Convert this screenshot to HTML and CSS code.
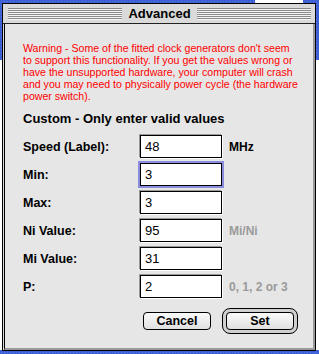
FILE: index.html
```html
<!DOCTYPE html>
<html lang="en">
<head>
    <meta charset="UTF-8">
    <meta name="viewport" content="width=device-width, initial-scale=1.0">
    <link rel="stylesheet" href="styles.css">
    <title>Advanced</title>
</head>
<body>
    <div class="desktop">
        <div class="back-window"></div>
        <div class="back-title"></div>

        <div class="window">
            <div class="titlebar">
                <span class="stripes"></span>
                <span class="title">Advanced</span>
                <span class="stripes"></span>
            </div>
            <div class="content">
                <p class="warning">
                    Warning - Some of the fitted clock generators don't seem<br>
                    to support this functionality. If you get the values wrong or<br>
                    have the unsupported hardware, your computer will crash<br>
                    and you may need to physically power cycle (the hardware<br>
                    power switch).
                </p>
                <h2 class="heading">Custom - Only enter valid values</h2>

                <div class="fields">
                    <label class="label">Speed (Label):</label>
                    <div class="field">48</div>
                    <span class="unit">MHz</span>

                    <label class="label">Min:</label>
                    <div class="field focused">3</div>
                    <span class="unit"></span>

                    <label class="label">Max:</label>
                    <div class="field">3</div>
                    <span class="unit"></span>

                    <label class="label">Ni Value:</label>
                    <div class="field">95</div>
                    <span class="unit dim">Mi/Ni</span>

                    <label class="label">Mi Value:</label>
                    <div class="field">31</div>
                    <span class="unit"></span>

                    <label class="label">P:</label>
                    <div class="field">2</div>
                    <span class="unit dim">0, 1, 2 or 3</span>
                </div>

                <div class="buttons">
                    <button class="btn">Cancel</button>
                    <div class="default-ring">
                        <button class="btn">Set</button>
                    </div>
                </div>
            </div>
        </div>
    </div>
</body>
</html>
```

FILE: styles.css
```css
body {
    margin: 0;
    padding: 0;
    font-family: 'Liberation Sans', Arial, sans-serif;
}

.desktop {
    position: relative;
    width: 319px;
    height: 354px;
    overflow: hidden;
    background-color: #3d5fd6;
    background-image: radial-gradient(#5a78e6 1px, transparent 1px);
    background-size: 3px 3px;
}

/* windows behind the dialog */
.back-window {
    position: absolute;
    left: 0;
    top: 60px;
    width: 319px;
    height: 290px;
    background: #fff;
}

.back-title {
    position: absolute;
    left: 255px;
    top: 0;
    width: 48px;
    height: 4px;
    background: #fff;
}

.window {
    position: absolute;
    left: 2px;
    top: 3px;
    width: 312px;
    height: 346px;
    border: 1px solid #000;
    background: #dcdcdc;
    display: flex;
    flex-direction: column;
}

.titlebar {
    height: 19px;
    display: flex;
    align-items: center;
    padding: 0 4px 0 5px;
    gap: 4px;
    border-bottom: 1px solid #222;
    background: #dadada;
}

.stripes {
    flex: 1;
    height: 12px;
    background: repeating-linear-gradient(to bottom, #8a8a8a 0, #8a8a8a 1px, #f4f4f4 1px, #f4f4f4 2px);
}

.title {
    font-weight: bold;
    font-size: 13px;
    padding: 0 2px;
    color: #000;
}

.content {
    flex: 1;
    margin: 0 0 0 1px;
    border-left: 1px solid #000;
    border-right: 2px solid #999;
    border-bottom: 2px solid #999;
    background: #e6e6e6;
    padding: 18px 0 0 18px;
}

.warning {
    margin: 0;
    color: #f00;
    font-size: 10.6px;
    line-height: 12px;
}

.heading {
    margin: 9px 0 0 0;
    font-size: 13px;
    line-height: 16px;
    color: #000;
}

.fields {
    margin-top: 8px;
    display: grid;
    grid-template-columns: 117px 82px auto;
    grid-auto-rows: 23px;
    row-gap: 5px;
    align-items: center;
}

.label {
    font-weight: bold;
    font-size: 12.5px;
    color: #000;
}

.field {
    box-sizing: border-box;
    height: 23px;
    border: 1px solid #000;
    box-shadow: -1px -1px 0 #999, 1px 1px 0 #fff;
    background: #fff;
    font-size: 13px;
    line-height: 21px;
    padding-left: 4px;
    color: #000;
}

.field.focused {
    box-shadow: 0 0 0 2px #8c8cde;
}

.unit {
    padding-left: 7px;
    font-weight: bold;
    font-size: 12px;
    color: #000;
}

.unit.dim {
    color: #9a9a9a;
}

.buttons {
    margin-top: 10px;
    padding-right: 15px;
    display: flex;
    justify-content: flex-end;
    align-items: center;
    gap: 11px;
}

.btn {
    width: 68px;
    height: 18px;
    border: 1px solid #000;
    border-radius: 4px;
    background: linear-gradient(#fafafa, #e0e0e0);
    font-family: 'Liberation Sans', Arial, sans-serif;
    font-weight: bold;
    font-size: 12.5px;
    color: #000;
    padding: 0;
}

.default-ring {
    padding: 3px;
    border: 1px solid #000;
    border-radius: 8px;
    background: #cfcfcf;
    display: flex;
}
```
